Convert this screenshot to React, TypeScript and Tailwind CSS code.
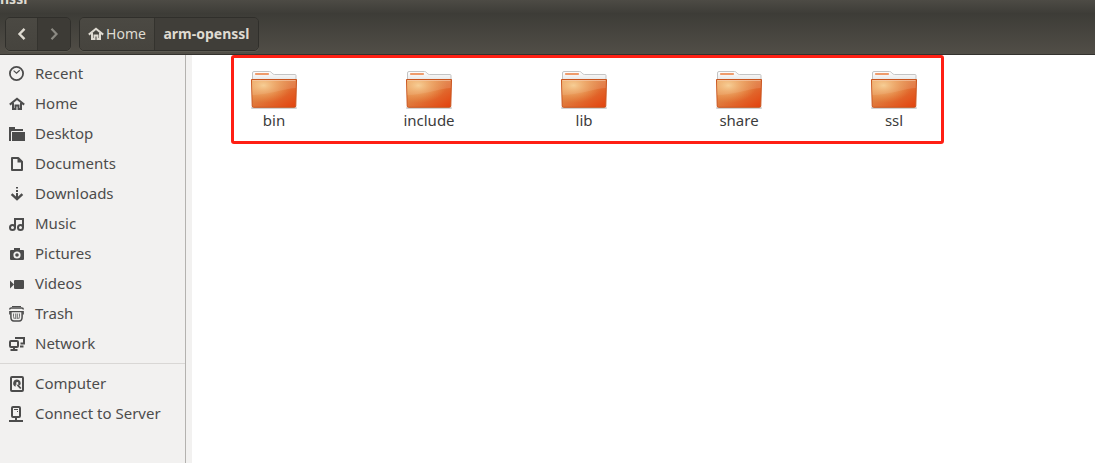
import type { ReactNode } from "react";

const HomeGlyph = () => (
  <>
    <path d="M.8 8.600 8 2.800l7.200 5.800" fill="none" stroke="currentColor" strokeWidth="2" />
    <path d="M4 7v6h2.500V9.500h3V13H12V7" fill="none" stroke="currentColor" strokeWidth="2" />
  </>
);

function Icon({ children }: { children: ReactNode }) {
  return (
    <svg viewBox="0 0 16 16" className="size-4 shrink-0" aria-hidden="true">
      {children}
    </svg>
  );
}

const places: { name: string; glyph: ReactNode }[] = [
  {
    name: "Recent",
    glyph: (
      <>
        <circle cx="7.5" cy="7.5" r="6.6" fill="none" stroke="currentColor" strokeWidth="1.8" />
        <path d="M4.6 4.600 7.500 7.300l3.200-3" fill="none" stroke="currentColor" strokeWidth="1.2" />
      </>
    ),
  },
  { name: "Home", glyph: <HomeGlyph /> },
  {
    name: "Desktop",
    glyph: (
      <>
        <path d="M0 1h6v2h8v2H2v10H0z" fill="currentColor" />
        <path d="M3 6h13v9H3z" fill="currentColor" />
        <path d="M1 4h2v11H1z" fill="currentColor" />
        <path d="M2.500 15V5.500H15" fill="none" stroke="#f2f1f0" />
      </>
    ),
  },
  {
    name: "Documents",
    glyph: (
      <>
        <path d="M3 2h6.200L13 5.800V14H3z" fill="none" stroke="currentColor" strokeWidth="2" strokeLinejoin="round" />
        <path d="M8.500 1.500v5H13z" fill="currentColor" />
      </>
    ),
  },
  {
    name: "Downloads",
    glyph: (
      <>
        <path d="M7 1h2v1.500H7zM7 4h2v2H7zM7 7h2v6H7z" fill="currentColor" />
        <path d="m2.600 8.200 5.400 5 5.400-5" fill="none" stroke="currentColor" strokeWidth="2.4" />
      </>
    ),
  },
  {
    name: "Music",
    glyph: (
      <>
        <path d="M5 2h10v2H7v8H5z" fill="currentColor" />
        <path d="M13 3h2v9h-2z" fill="currentColor" />
        <circle cx="3.5" cy="11.5" r="2.5" fill="none" stroke="currentColor" strokeWidth="2" />
        <circle cx="11.5" cy="11.5" r="2.5" fill="none" stroke="currentColor" strokeWidth="2" />
      </>
    ),
  },
  {
    name: "Pictures",
    glyph: (
      <path
        fillRule="evenodd"
        d="M5 2h6v2h3a1 1 0 0 1 1 1v8a1 1 0 0 1-1 1H2a1 1 0 0 1-1-1V5a1 1 0 0 1 1-1h3zM8 5.400a3.600 3.600 0 1 0 0 7.200 3.600 3.600 0 0 0 0-7.200zm0 1.800a1.800 1.800 0 1 1 0 3.600 1.800 1.800 0 0 1 0-3.600z"
        fill="currentColor"
      />
    ),
  },
  {
    name: "Videos",
    glyph: (
      <>
        <rect x="5" y="4" width="10" height="9" rx="1" fill="currentColor" />
        <path d="M1 4.500 5 8.500 1 12.500z" fill="currentColor" />
      </>
    ),
  },
  {
    name: "Trash",
    glyph: (
      <g fill="none" stroke="currentColor">
        <path d="M3 .5h9" strokeWidth="1" />
        <path d="M.7 3.500q0-1.500 1.500-1.500h10.600q1.500 0 1.500 1.500" strokeWidth="1.500" />
        <path d="M.8 8.500V5.700h13.400v2.800" strokeWidth="1.300" />
        <path d="M1.900 6v5q0 4 3 4h5.200q3 0 3-4V6" strokeWidth="1.500" />
        <path d="M4.600 7.500q-.6 3 .7 5.500M10.400 7.500q.6 3-.7 5.500M6.700 7.500V13M8.300 7.500V13" strokeWidth=".8" />
      </g>
    ),
  },
  {
    name: "Network",
    glyph: (
      <>
        <rect x="1" y="5" width="8" height="6" rx="1" fill="none" stroke="currentColor" strokeWidth="2" />
        <path d="M4 12h2v1h2.500v2h-7v-2H4z" fill="currentColor" />
        <path d="M7 3V2h8v5.500h-3.500" fill="none" stroke="currentColor" strokeWidth="2" />
        <path d="M11 9.500h3.500v2H11z" fill="currentColor" />
      </>
    ),
  },
];

const devices: { name: string; glyph: ReactNode }[] = [
  {
    name: "Computer",
    glyph: (
      <>
        <rect x="2" y="1" width="12" height="14" rx="1" fill="none" stroke="currentColor" strokeWidth="2" />
        <path
          fillRule="evenodd"
          d="M8 3.500a3.800 3.800 0 0 0-1.500 7.300L6.800 8.500 9 8.200l2 1.300A3.800 3.800 0 0 0 8 3.500zm.3 2.600a1.100 1.100 0 1 1 0 2.200 1.100 1.100 0 0 1 0-2.200z"
          fill="currentColor"
        />
        <path d="m8.500 8.800 3.300 3.700" stroke="currentColor" strokeWidth="1.800" />
      </>
    ),
  },
  {
    name: "Connect to Server",
    glyph: (
      <>
        <rect x="3" y="1" width="8" height="10" rx="1" fill="none" stroke="currentColor" strokeWidth="2" />
        <path d="M5 3.500h4M8 5.500h1" stroke="currentColor" />
        <path d="M6 11h2v3h6v2H0v-2h6z" fill="currentColor" />
      </>
    ),
  },
];

const folders = ["bin", "include", "lib", "share", "ssl"];

function PlaceList({ items }: { items: typeof places }) {
  return (
    <ul>
      {items.map((item) => (
        <li key={item.name}>
          <a href="#" className="flex h-[30px] items-center gap-2.5 pl-[9px]">
            <Icon>{item.glyph}</Icon>
            <span className="pb-0.5">{item.name}</span>
          </a>
        </li>
      ))}
    </ul>
  );
}

function FolderIcon() {
  return (
    <svg viewBox="0 0 48 40" className="h-10 w-12" aria-hidden="true">
      <defs>
        <linearGradient id="body" x1="0" y1="0" x2="1" y2="1">
          <stop offset="0" stopColor="#e9a05c" />
          <stop offset=".45" stopColor="#e07a3c" />
          <stop offset="1" stopColor="#e3400c" />
        </linearGradient>
        <radialGradient id="glow" cx=".26" cy=".2" r=".65">
          <stop offset="0" stopColor="#f8d49c" stopOpacity=".9" />
          <stop offset="1" stopColor="#f0a050" stopOpacity="0" />
        </radialGradient>
        <linearGradient id="paper" x1="0" y1="0" x2="0" y2="1">
          <stop offset="0" stopColor="#fff" />
          <stop offset="1" stopColor="#e2e2e2" />
        </linearGradient>
      </defs>
      <path d="M2 38h44" stroke="#000" strokeOpacity=".18" strokeWidth="2" strokeLinecap="round" />
      <path d="M2.500 12V3a1.500 1.500 0 0 1 1.500-1.500h15.500q1 0 1.700.8l1.600 1.500q.7.700 1.700.7H45a1 1 0 0 1 1 1V12z" fill="url(#paper)" stroke="#c4c4c4" />
      <rect x="5" y="3" width="14" height="2" rx=".8" fill="#ef9b6b" />
      <path d="M1.500 9.500h45l-.7 26.500a1.300 1.300 0 0 1-1.300 1.300H3.500a1.300 1.300 0 0 1-1.300-1.300z" fill="url(#body)" stroke="#c9551f" />
      <path d="M2 10h44l-.3 8C32 19 18 25 2.400 25z" fill="#fff" fillOpacity=".12" />
      <path d="M2 10h44l-.7 27H2.700z" fill="url(#glow)" />
      <path d="M2.500 10.500h43" stroke="#f8ceb0" strokeOpacity=".6" />
    </svg>
  );
}

export default function App() {
  return (
    <div className="flex min-h-screen flex-col bg-white font-['Noto_Sans','Open_Sans',sans-serif] text-[15px] leading-5 text-[#3c3c3c]">
      <header className="bg-[#43413b] text-[14px] text-[#dfdbd2]">
        <div className="flex h-[13px] items-end overflow-hidden bg-linear-to-b from-[#4d4b45] to-[#3e3d38] pb-1">
          <h1 className="text-[14px] font-bold">nssl</h1>
        </div>
        <div className="flex h-[42px] items-center gap-2 border-b border-[#33322e] bg-linear-to-b from-[#3d3c37] to-[#514e47] px-[5px]">
          <nav aria-label="History" className="flex h-[34px] overflow-hidden rounded-[5px] border border-[#302f2b] shadow-[0_1px_0_#5c5a52]">
            <button aria-label="Back" className="flex w-8 items-center justify-center border-r border-[#34332e] bg-linear-to-b from-[#4b4943] to-[#46443e]">
              <Icon>
                <path d="M10.500 2.800 5.500 8l5 5.200" fill="none" stroke="currentColor" strokeWidth="2.400" />
              </Icon>
            </button>
            <button aria-label="Forward" disabled className="flex w-8 items-center justify-center bg-[#3d3b36] text-[#8b8982]">
              <Icon>
                <path d="m5.500 2.800 5 5.200-5 5.200" fill="none" stroke="currentColor" strokeWidth="2.200" />
              </Icon>
            </button>
          </nav>
          <nav aria-label="Path" className="flex h-[34px] overflow-hidden rounded-[5px] border border-[#302f2b] shadow-[0_1px_0_#5c5a52]">
            <button className="flex w-[75px] items-center justify-center gap-0.5 border-r border-[#34332e] bg-linear-to-b from-[#4b4943] to-[#46443e]">
              <Icon>
                <HomeGlyph />
              </Icon>
              Home
            </button>
            <button aria-current="page" className="flex w-[103px] items-center justify-center bg-[#403e39] font-bold">
              arm-openssl
            </button>
          </nav>
        </div>
      </header>
      <div className="flex grow">
        <aside className="w-[186px] shrink-0 border-r border-[#b4b2af] bg-[#f2f1f0] pt-1 text-[#4c4c4c]">
          <PlaceList items={places} />
          <hr className="mt-1 mb-[5px] border-[#d9d7d5]" />
          <PlaceList items={devices} />
        </aside>
        <div className="w-1.5 shrink-0 bg-[#f2f1f0]" />
        <main className="grow pl-[39px]">
          <ul className="flex h-[89px] w-fit gap-[75px] rounded-[3px] border-3 border-[#ff1f14] pt-3 pr-[7px]">
            {folders.map((name) => (
              <li key={name} className="w-20">
                <a href="#" className="flex flex-col items-center">
                  <FolderIcon />
                  <span>{name}</span>
                </a>
              </li>
            ))}
          </ul>
        </main>
      </div>
    </div>
  );
}
